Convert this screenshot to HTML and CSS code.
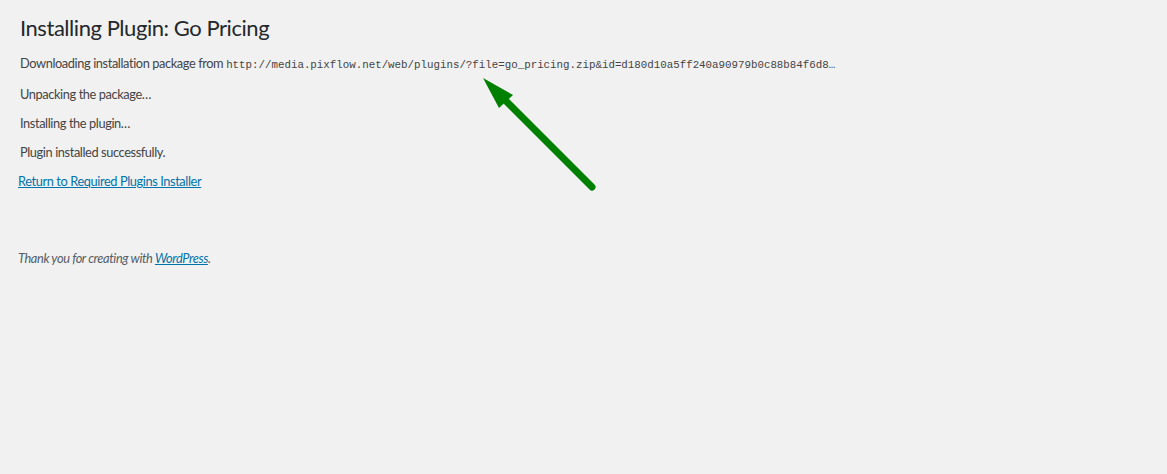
FILE: index.html
```html
<!DOCTYPE html>
<html lang="en">
<head>
  <meta charset="UTF-8">
  <title>Installing Plugin: Go Pricing</title>
  <link rel="stylesheet" href="styles.css">
</head>
<body>

  <div class="wrap">
    <h1>Installing Plugin: Go Pricing</h1>

    <p class="first">Downloading installation package from <code>http://media.pixflow.net/web/plugins/?file=go_pricing.zip&amp;id=d180d10a5ff240a90979b0c88b84f6d8&hellip;</code></p>
    <p>Unpacking the package&hellip;</p>
    <p>Installing the plugin&hellip;</p>
    <p>Plugin installed successfully.</p>

    <div class="actions">
      <a href="#">Return to Required Plugins Installer</a>
    </div>
  </div>

  <div class="footer">
    <span>Thank you for creating with <a href="#">WordPress</a>.</span>
  </div>

  <!-- annotation arrow -->
  <svg class="arrow" width="130" height="130" viewBox="0 0 130 130">
    <line x1="22" y1="22" x2="109" y2="109" stroke="#008000" stroke-width="7" stroke-linecap="round"/>
    <polygon points="0,0 30,17 16,30" fill="#008000"/>
  </svg>

</body>
</html>
```

FILE: styles.css
```css
body {
  background: #f1f1f1;
  color: #444;
  font-family: Lato, "Open Sans", sans-serif;
  font-size: 12.8px;
  letter-spacing: -0.4px;
  margin: 0;
  position: relative;
  height: 474px;
}

.wrap {
  padding: 14px 0 0 20px;
}

h1 {
  font-size: 22px;
  font-weight: 400;
  letter-spacing: -0.45px;
  color: #23282d;
  line-height: 28px;
  margin: 0 0 12px;
}

p {
  margin: 0 0 11px;
  line-height: 18px;
}

p.first {
  margin-top: 2px;
  margin-bottom: 11px;
}

code {
  font-family: "Liberation Mono", monospace;
  font-size: 10.8px;
  letter-spacing: 0;
  color: #444;
}

a {
  color: #0073aa;
  text-decoration: underline;
}

.actions {
  margin-left: -2px;
  line-height: 18px;
}

.footer {
  padding: 59px 0 0 18px;
  font-style: italic;
  line-height: 18px;
  color: #555d66;
}

.arrow {
  position: absolute;
  left: 483px;
  top: 78px;
}
```
